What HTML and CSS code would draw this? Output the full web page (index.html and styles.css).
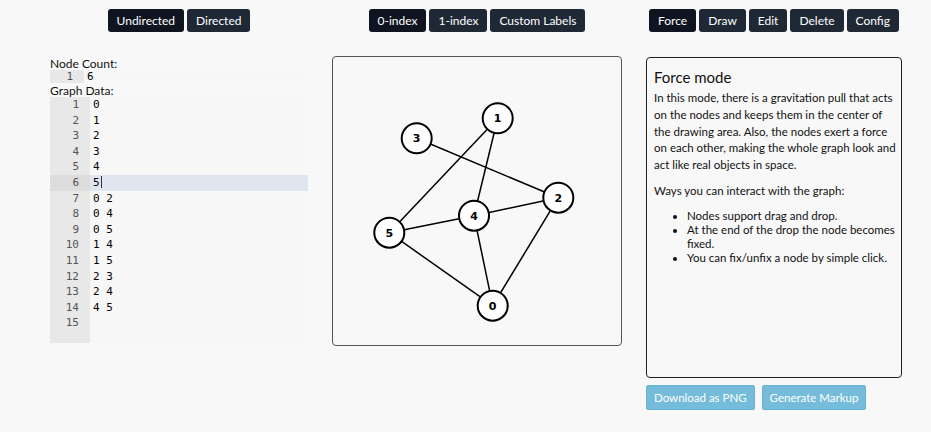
FILE: index.html
```html
<!DOCTYPE html>
<html>
<head>
<meta charset="utf-8">
<link rel="stylesheet" href="styles.css">
</head>
<body>
<div class="page">
  <div class="col col-input">
    <div class="btn-group">
      <button class="btn active">Undirected</button>
      <button class="btn">Directed</button>
    </div>
    <div class="input-area">
      <div class="label">Node Count:</div>
      <div class="editor small">
        <div class="line"><span class="gutter g1">1</span><span class="code">6</span></div>
      </div>
      <div class="label">Graph Data:</div>
      <div class="editor big">
        <div class="gutter-bg"></div>
        <div class="line"><span class="gutter">1</span><span class="code">0</span></div>
        <div class="line"><span class="gutter">2</span><span class="code">1</span></div>
        <div class="line"><span class="gutter">3</span><span class="code">2</span></div>
        <div class="line"><span class="gutter">4</span><span class="code">3</span></div>
        <div class="line"><span class="gutter">5</span><span class="code">4</span></div>
        <div class="line current"><span class="gutter">6</span><span class="code">5<span class="cursor"></span></span></div>
        <div class="line"><span class="gutter">7</span><span class="code">0 2</span></div>
        <div class="line"><span class="gutter">8</span><span class="code">0 4</span></div>
        <div class="line"><span class="gutter">9</span><span class="code">0 5</span></div>
        <div class="line"><span class="gutter">10</span><span class="code">1 4</span></div>
        <div class="line"><span class="gutter">11</span><span class="code">1 5</span></div>
        <div class="line"><span class="gutter">12</span><span class="code">2 3</span></div>
        <div class="line"><span class="gutter">13</span><span class="code">2 4</span></div>
        <div class="line"><span class="gutter">14</span><span class="code">4 5</span></div>
        <div class="line"><span class="gutter">15</span><span class="code"></span></div>
      </div>
    </div>
  </div>

  <div class="col col-graph">
    <div class="btn-group">
      <button class="btn active">0-index</button>
      <button class="btn">1-index</button>
      <button class="btn">Custom Labels</button>
    </div>
    <div class="canvas">
      <svg width="288" height="288" viewBox="0 0 288 288">
        <g stroke="#000" stroke-width="1.5">
          <line x1="159.7" y1="248.7" x2="225.3" y2="140.7"/>
          <line x1="159.7" y1="248.7" x2="141" y2="158.7"/>
          <line x1="159.7" y1="248.7" x2="56.3" y2="175.7"/>
          <line x1="164.7" y1="61.3" x2="141" y2="158.7"/>
          <line x1="164.7" y1="61.3" x2="56.3" y2="175.7"/>
          <line x1="225.3" y1="140.7" x2="83.7" y2="81.3"/>
          <line x1="225.3" y1="140.7" x2="141" y2="158.7"/>
          <line x1="141" y1="158.7" x2="56.3" y2="175.7"/>
        </g>
        <g fill="#fff" stroke="#000" stroke-width="2">
          <circle cx="159.7" cy="248.7" r="15"/>
          <circle cx="164.7" cy="61.3" r="15"/>
          <circle cx="225.3" cy="140.7" r="15"/>
          <circle cx="83.7" cy="81.3" r="15"/>
          <circle cx="141" cy="158.7" r="15"/>
          <circle cx="56.3" cy="175.7" r="15"/>
        </g>
        <g class="node-label" text-anchor="middle">
          <text x="159.7" y="252.7">0</text>
          <text x="164.7" y="65.3">1</text>
          <text x="225.3" y="144.7">2</text>
          <text x="83.7" y="85.3">3</text>
          <text x="141" y="162.7">4</text>
          <text x="56.3" y="179.7">5</text>
        </g>
      </svg>
    </div>
  </div>

  <div class="col col-info">
    <div class="btn-group">
      <button class="btn active">Force</button>
      <button class="btn">Draw</button>
      <button class="btn">Edit</button>
      <button class="btn">Delete</button>
      <button class="btn">Config</button>
    </div>
    <div class="info">
      <h3 class="info-title">Force mode</h3>
      <p class="info-text">In this mode, there is a gravitation pull that acts on the nodes and keeps them in the center of the drawing area. Also, the nodes exert a force on each other, making the whole graph look and act like real objects in space.</p>
      <p class="info-text">Ways you can interact with the graph:</p>
      <ul class="info-list">
        <li>Nodes support drag and drop.</li>
        <li>At the end of the drop the node becomes fixed.</li>
        <li>You can fix/unfix a node by simple click.</li>
      </ul>
    </div>
    <div class="actions">
      <button class="btn-info">Download as PNG</button>
      <button class="btn-info">Generate Markup</button>
    </div>
  </div>
</div>
</body>
</html>
```

FILE: styles.css
```css
* { box-sizing: border-box; }
html, body {
  margin: 0;
  padding: 0;
  background: #f8f8f8;
  font-family: Lato, "Liberation Sans", sans-serif;
  color: #111;
}
.page {
  display: grid;
  grid-template-columns: 258px 290px 256px;
  column-gap: 24px;
  padding: 9px 0 0 50px;
}
.col {
  display: flex;
  flex-direction: column;
}
.btn-group {
  display: flex;
  gap: 3px;
  align-self: center;
}
.btn {
  font-family: Lato, "Liberation Sans", sans-serif;
  font-size: 12px;
  color: #fff;
  background: #1f2835;
  border: none;
  border-radius: 3px;
  height: 23px;
  padding: 0 9px;
  line-height: 23px;
}
.btn.active { background: #0f1520; }

.input-area {
  margin-top: 25px;
  font-size: 12px;
}
.label {
  line-height: 13px;
  color: #111;
}
.editor {
  font-family: "DejaVu Sans Mono", monospace;
  font-size: 11px;
  background: #f7f7f7;
  position: relative;
}
.editor.small { margin: 0 0 1px; }
.editor.big {
  height: 246px;
  padding-top: 0;
}
.gutter-bg {
  position: absolute;
  left: 0; top: 0; bottom: 0;
  width: 40px;
  background: #e8e8e8;
}
.line {
  display: flex;
  height: 15.6px;
  line-height: 15.6px;
  position: relative;
}
.editor.small .line { height: 13px; line-height: 13px; }
.line.current { background: #dfe6f0; }
.line.current .gutter { background: #dcdcdc; }
.gutter {
  width: 40px;
  text-align: right;
  padding-right: 11px;
  color: #555;
  flex: none;
}
.gutter.g1 {
  width: 34px;
  background: #e8e8e8;
  padding-right: 11px;
}
.code {
  padding-left: 3px;
  color: #000;
}
.cursor {
  display: inline-block;
  width: 1px;
  height: 12px;
  background: #333;
  vertical-align: -2px;
  margin-left: 1px;
}

.canvas {
  margin-top: 24px;
  width: 290px;
  height: 290px;
  border: 1px solid #555;
  border-radius: 4px;
}
.canvas svg { display: block; }
.node-label {
  font-family: "DejaVu Sans", sans-serif;
  font-weight: bold;
  font-size: 11px;
  fill: #000;
}

.info {
  margin-top: 25px;
  height: 321px;
  border: 1px solid #222;
  border-radius: 4px;
  padding: 8px 1px 8px 7px;
}
.info-title {
  margin: 0 0 2px;
  font-size: 15px;
  font-weight: normal;
  line-height: 22px;
}
.info-text {
  margin: 0 0 9px;
  font-size: 11.5px;
  line-height: 16.8px;
}
.info-list {
  margin: 0;
  padding-left: 33px;
  font-size: 11.5px;
  line-height: 14px;
}
.actions {
  display: flex;
  gap: 7px;
  margin-top: 7px;
}
.btn-info {
  font-family: Lato, "Liberation Sans", sans-serif;
  font-size: 11.5px;
  color: #fff;
  background: #74bcd9;
  border: 1px solid #6ab4d3;
  border-radius: 2px;
  height: 25px;
  padding: 0 7px;
}
```
